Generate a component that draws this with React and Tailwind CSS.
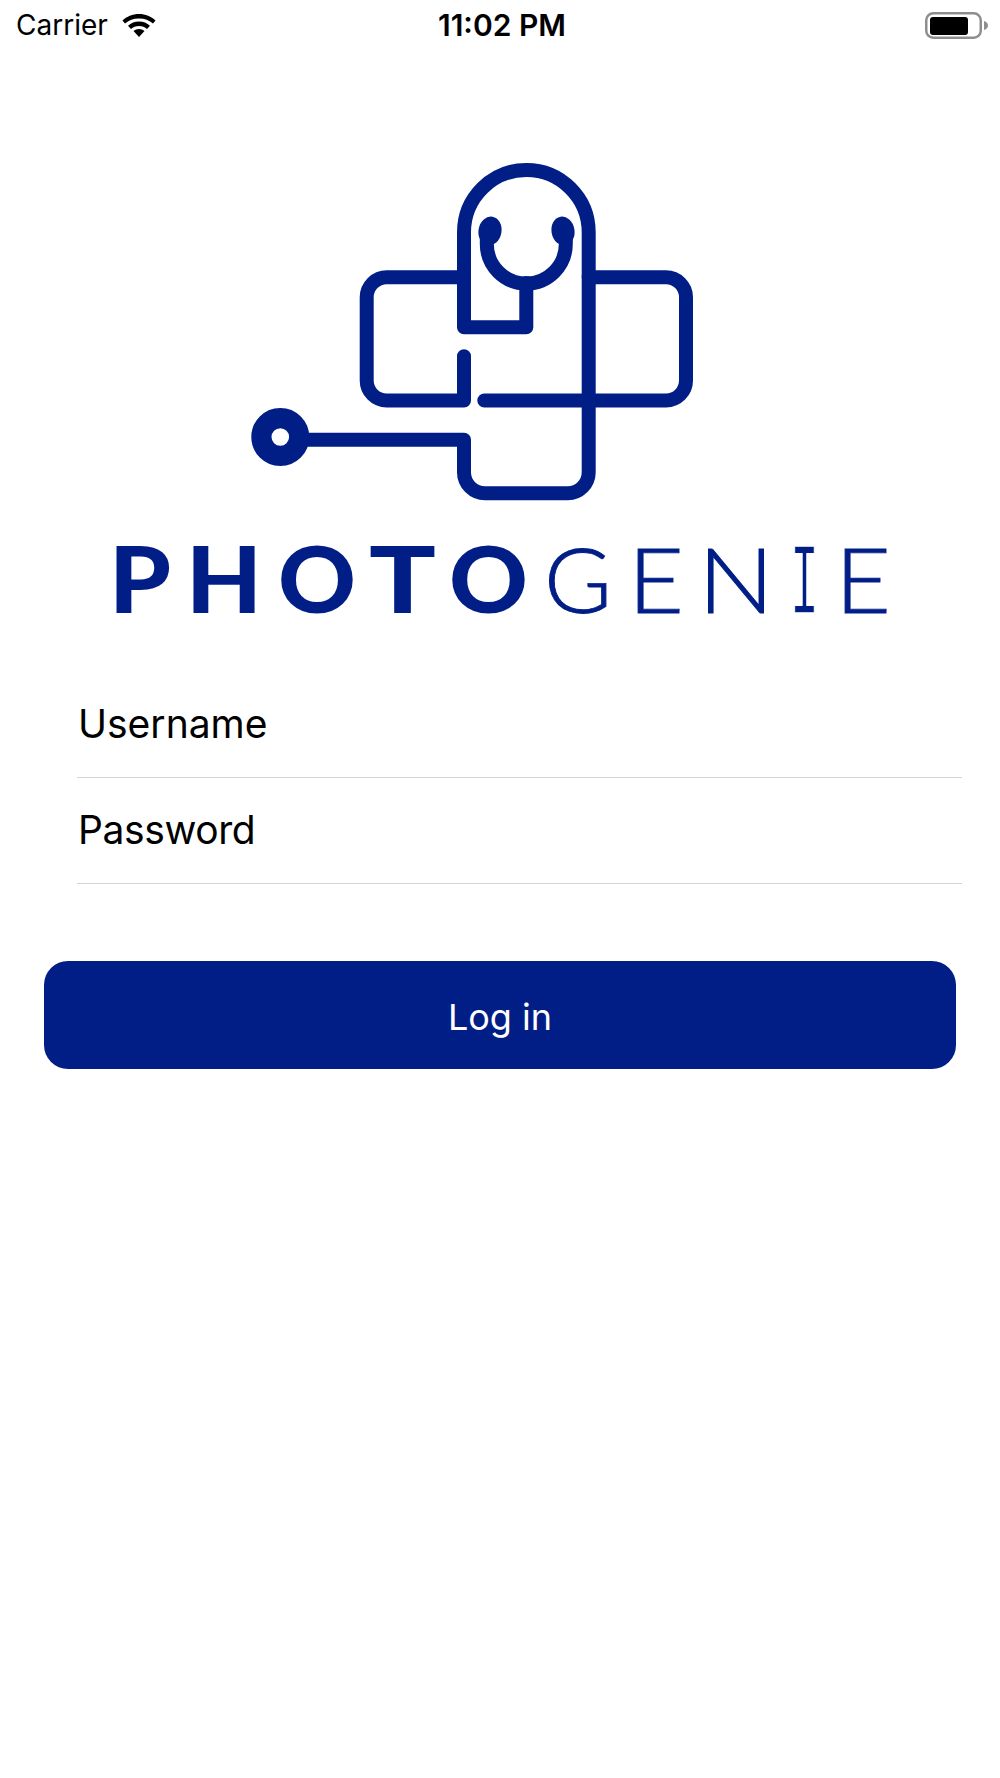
const BLUE = "#011e87";

const slab = [
  ["P", 109, 62],
  ["H", 186, 76],
  ["O", 278, 78],
  ["T", 369, 67],
  ["O", 449, 79],
];
const thin = [
  ["G", 544, 68, "Lato", 300, 91, 0.9, BLUE],
  ["E", 628, 56, "Lato", 300, 91, 0.9, BLUE],
  ["N", 698, 76, "Lato", 300, 91, 0.9, BLUE],
  ["I", 790, 29, "Liberation Mono", 400, 102, 1.5, "#ffffff"],
  ["E", 835, 56, "Lato", 300, 91, 0.9, BLUE],
];

function Logo() {
  return (
    <svg width="1000" height="580" viewBox="0 50 1000 580" className="block" fill="none">
      <g stroke={BLUE} strokeWidth="14" strokeLinejoin="round" strokeLinecap="round">
        <path d="M526.3 283V327.3H464V232.3A62.35 62.35 0 0 1 588.7 232.3V472.3a21 21 0 0 1-21 21H485a21 21 0 0 1-21-21V439.7H300" />
        <path d="M464 277.3H386.7a20 20 0 0 0-20 20V380.5a20 20 0 0 0 20 20H464V356.3" />
        <path d="M588.7 277.3H666a20 20 0 0 1 20 20V380.5a20 20 0 0 1-20 20H484.3" />
        <path d="M486.8 234V244A39.5 39.5 0 0 0 565.8 244V234" strokeLinecap="butt" />
      </g>
      <ellipse cx="490" cy="231" rx="11.5" ry="14.5" fill={BLUE} transform="rotate(10 490 231)" />
      <ellipse cx="563" cy="231" rx="11.5" ry="14.5" fill={BLUE} transform="rotate(-10 563 231)" />
      <circle cx="280.3" cy="437" r="18.9" stroke={BLUE} strokeWidth="20.2" />
      {slab.map(([c, x, w], i) => (
        <text
          key={i}
          x={x}
          y="613"
          fontFamily="Lato, sans-serif"
          fontWeight="900"
          fontSize="91"
          textLength={w}
          lengthAdjust="spacingAndGlyphs"
          fill={BLUE}
        >
          {c}
        </text>
      ))}
      {thin.map(([c, x, w, family, weight, size, sw, strokeColor], i) => (
        <text
          key={i}
          x={x}
          y="613"
          fontFamily={`${family}, sans-serif`}
          fontWeight={weight}
          fontSize={size}
          textLength={w}
          lengthAdjust="spacingAndGlyphs"
          fill={BLUE}
          stroke={strokeColor}
          strokeWidth={sw}
        >
          {c}
        </text>
      ))}
    </svg>
  );
}

function StatusBar() {
  return (
    <div className="h-[50px] flex items-center justify-between pl-4 pr-[12px] text-black font-['Inter',sans-serif]">
      <div className="flex items-center gap-[14px] w-[200px]">
        <span className="text-[28px] leading-none">Carrier</span>
        <svg width="34" height="23" viewBox="0 0 34 23" fill="black">
          <path d="M17 0C10.5 0 4.8 2.5 0.5 6.5L3 9.6C6.5 6.2 11.5 4.4 17 4.4S27.5 6.2 31 9.6L33.5 6.5C29.2 2.5 23.5 0 17 0Z" />
          <path d="M17 7.5C12.8 7.5 9 9 6 11.8L9 15C11 13 13.8 12 17 12S23 13 25 15L28 11.8C25 9 21.2 7.5 17 7.5Z" />
          <path d="M17 15C15 15 13 15.7 11.5 17L17 23L22.5 17C21 15.7 19 15 17 15Z" />
        </svg>
      </div>
      <span className="text-[30px] leading-none font-semibold">11:02 PM</span>
      <div className="w-[200px] flex justify-end">
        <svg width="63" height="27" viewBox="0 0 63 27" fill="none">
          <rect x="1.25" y="1.25" width="54.5" height="24.5" rx="7" stroke="#8e8e8e" strokeWidth="2.5" />
          <rect x="5" y="5" width="38" height="18" rx="3" fill="black" />
          <path d="M59 9C61.5 9.8 63 11.5 63 13.5S61.5 17.2 59 18Z" fill="#8e8e8e" />
        </svg>
      </div>
    </div>
  );
}

export default function App() {
  return (
    <div className="min-h-[1778px] bg-white">
      <StatusBar />
      <Logo />
      <div className="ml-[77px] mr-[38px] mt-[42px]">
        <input
          type="text"
          placeholder="Username"
          className="block w-full h-[106px] border-b-[1.5px] border-[#d4d4d4] px-[1px] pt-[12px] pb-[15px] text-[39px] text-black placeholder:text-black outline-none font-['Inter',sans-serif]"
        />
        <input
          type="password"
          placeholder="Password"
          className="block w-full h-[106px] border-b-[1.5px] border-[#d4d4d4] px-[1px] pt-[12px] pb-[15px] text-[39px] tracking-[-0.4px] text-black placeholder:text-black outline-none font-['Inter',sans-serif]"
        />
      </div>
      <button className="block ml-[44px] mt-[77px] w-[912px] h-[108px] pt-[4px] rounded-[24px] bg-[#011e87] text-white text-[36px] font-['Inter',sans-serif]">
        Log in
      </button>
    </div>
  );
}
